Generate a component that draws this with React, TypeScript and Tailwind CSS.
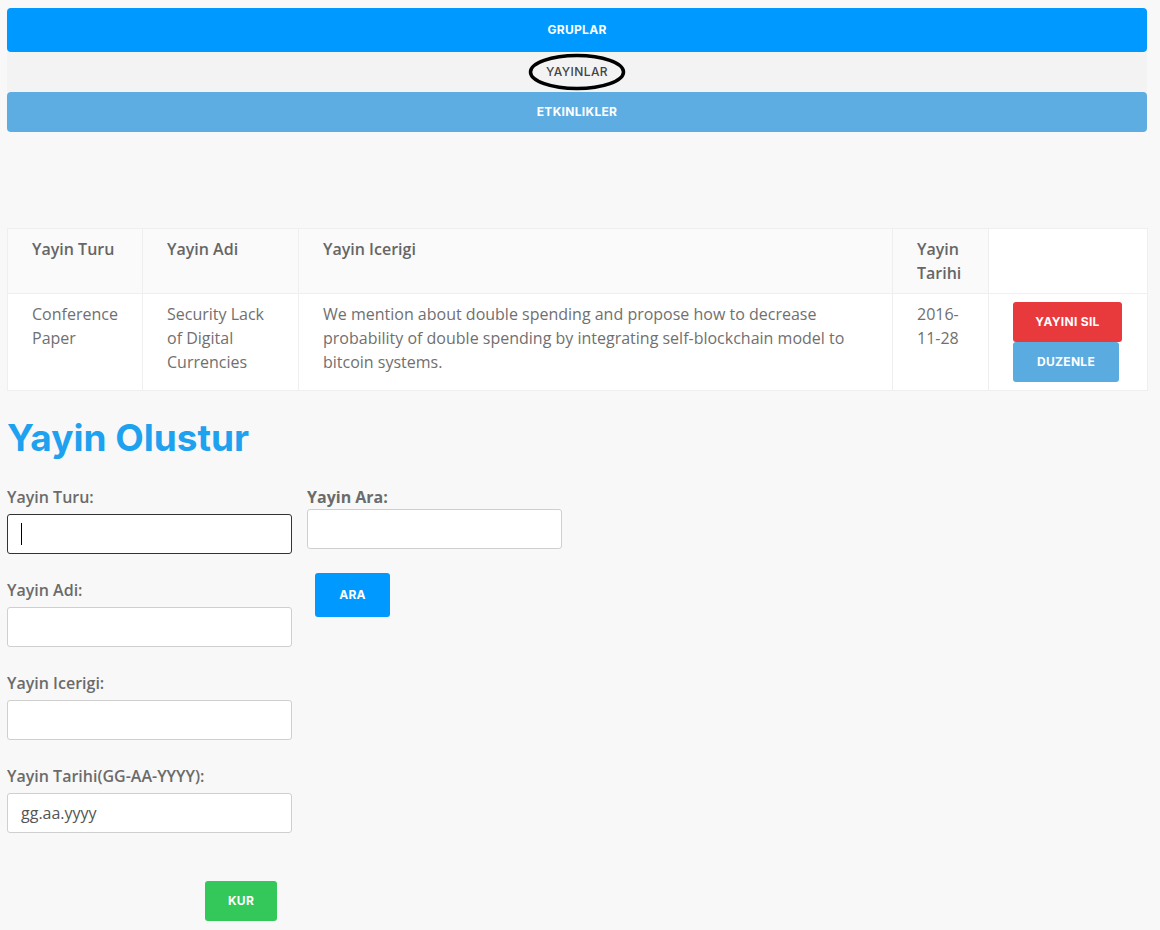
import React from "react";

const navFont = { fontFamily: "Inter, 'Liberation Sans', sans-serif" };

const fields = [
  { label: "Yayin Turu:", focused: true },
  { label: "Yayin Adi:" },
  { label: "Yayin Icerigi:" },
  { label: "Yayin Tarihi(GG-AA-YYYY):", placeholder: "gg.aa.yyyy" },
];

export default function App() {
  return (
    <div
      className="min-h-screen bg-[#f8f8f8] pt-2 pl-[7px] pr-[13px] text-[#666]"
      style={{ fontFamily: "'Open Sans', 'Liberation Sans', sans-serif" }}
    >
      <div className="w-[1140px]">
        {/* nav */}
        <div style={navFont}>
          <div className="flex h-[44px] items-center justify-center rounded-[4px] bg-[#0099ff] text-[12px] font-bold tracking-[0.3px] text-white">
            GRUPLAR
          </div>
          <div className="relative flex h-[40px] items-center justify-center bg-[#f3f3f3] text-[12px] font-medium tracking-[0.4px] text-[#444]">
            <span className="relative">
              YAYINLAR
              <svg
                className="absolute left-1/2 top-1/2 -translate-x-1/2 -translate-y-1/2"
                width="100"
                height="38"
                viewBox="0 0 100 38"
              >
                <ellipse cx="50" cy="19" rx="46.5" ry="16.5" fill="none" stroke="#000" strokeWidth="3.5" />
              </svg>
            </span>
          </div>
          <div className="flex h-[40px] items-center justify-center rounded-[4px] bg-[#5dade2] text-[12px] font-bold tracking-[0.3px] text-white">
            ETKINLIKLER
          </div>
        </div>

        {/* table */}
        <table className="mt-[96px] w-[1140px] table-fixed border-collapse text-[16px] leading-6">
          <colgroup>
            <col className="w-[135px]" />
            <col className="w-[156px]" />
            <col className="w-[594px]" />
            <col className="w-[96px]" />
            <col className="w-[159px]" />
          </colgroup>
          <thead>
            <tr className="text-left align-top font-semibold text-[#666]">
              <th className="border border-[#efefef] bg-[#fafafa] px-6 pt-2 pb-2 font-semibold">Yayin Turu</th>
              <th className="border border-[#efefef] bg-[#fafafa] px-6 pt-2 pb-2 font-semibold">Yayin Adi</th>
              <th className="border border-[#efefef] bg-[#fafafa] px-6 pt-2 pb-2 font-semibold">Yayin Icerigi</th>
              <th className="border border-[#efefef] bg-[#fafafa] px-6 pt-2 pb-2 font-semibold">Yayin Tarihi</th>
              <th className="border border-[#efefef] bg-white px-6 pt-2 pb-2"></th>
            </tr>
          </thead>
          <tbody>
            <tr className="bg-white align-top text-[#707070]">
              <td className="border border-[#efefef] px-6 pt-2 pb-2">Conference Paper</td>
              <td className="border border-[#efefef] px-6 pt-2 pb-2">Security Lack of Digital Currencies</td>
              <td className="border border-[#efefef] px-6 pt-2 pb-2">
                We mention about double spending and propose how to decrease probability of double spending by
                integrating self-blockchain model to bitcoin systems.
              </td>
              <td className="border border-[#efefef] px-6 pt-2 pb-2">2016-11-28</td>
              <td className="border border-[#efefef] px-6 pt-2 pb-2">
                <div className="flex flex-col items-start" style={navFont}>
                  <button className="flex h-[40px] w-[109px] items-center justify-center rounded-[3px] bg-[#e8393d] text-[12px] font-bold tracking-[0.3px] text-white">
                    YAYINI SIL
                  </button>
                  <button className="flex h-[40px] w-[106px] items-center justify-center rounded-[3px] bg-[#5aabe0] text-[12px] font-bold tracking-[0.3px] text-white">
                    DUZENLE
                  </button>
                </div>
              </td>
            </tr>
          </tbody>
        </table>

        {/* form */}
        <h1 className="mt-[25px] text-[37px] font-bold leading-[44px] text-[#1ea1ee]" style={navFont}>
          Yayin Olustur
        </h1>

        <div className="mt-[26px] flex items-start gap-[15px]">
          <div className="flex w-[285px] flex-col">
            {fields.map((f, i) => (
              <div key={f.label} className={i > 0 ? "mt-[25px]" : ""}>
                <label className="block text-[16px] font-semibold leading-[22px] text-[#6b6b6b]">{f.label}</label>
                <div
                  className={`mt-[6px] flex h-[40px] items-center rounded-[3px] bg-white px-[13px] text-[16px] text-[#555] ${
                    f.focused ? "border border-[#333]" : "border border-[#cfcfcf]"
                  }`}
                >
                  {f.focused && <span className="block h-[22px] w-px bg-black" />}
                  {f.placeholder}
                </div>
              </div>
            ))}
            <button
              className="mt-[48px] ml-[198px] flex h-[40px] w-[72px] items-center justify-center rounded-[3px] bg-[#34c85a] text-[12px] font-bold tracking-[0.3px] text-white"
              style={navFont}
            >
              KUR
            </button>
          </div>

          <div className="flex w-[255px] flex-col">
            <label className="block text-[16px] font-bold leading-[22px] text-[#6b6b6b]">Yayin Ara:</label>
            <div className="mt-px h-[40px] rounded-[3px] border border-[#cfcfcf] bg-white" />
            <button
              className="mt-[24px] ml-[8px] flex h-[44px] w-[75px] items-center justify-center rounded-[3px] bg-[#0099ff] text-[12px] font-bold tracking-[0.3px] text-white"
              style={navFont}
            >
              ARA
            </button>
          </div>
        </div>
      </div>
    </div>
  );
}
